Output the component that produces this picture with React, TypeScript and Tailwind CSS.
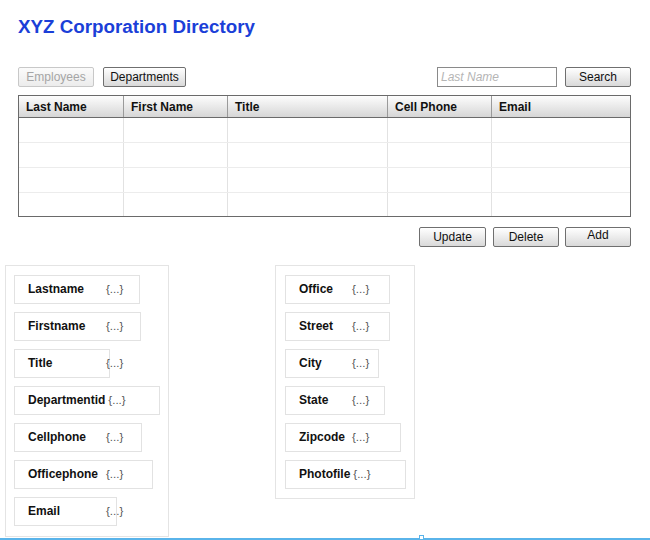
import React from "react";

const columns = [
  { label: "Last Name", width: "w-[105px]" },
  { label: "First Name", width: "w-[104px]" },
  { label: "Title", width: "w-[160px]" },
  { label: "Cell Phone", width: "w-[104px]" },
  { label: "Email", width: "w-[138px]" },
];

const leftFields = [
  { label: "Lastname", width: "w-[126px]" },
  { label: "Firstname", width: "w-[127px]" },
  { label: "Title", width: "w-[96px]" },
  { label: "Departmentid", width: "w-[146px]" },
  { label: "Cellphone", width: "w-[128px]" },
  { label: "Officephone", width: "w-[139px]" },
  { label: "Email", width: "w-[103px]" },
];

const rightFields = [
  { label: "Office", width: "w-[105px]" },
  { label: "Street", width: "w-[105px]" },
  { label: "City", width: "w-[94px]" },
  { label: "State", width: "w-[100px]" },
  { label: "Zipcode", width: "w-[116px]" },
  { label: "Photofile", width: "w-[121px]" },
];

function Btn({ label, className = "", disabled = false }: { label: string; className?: string; disabled?: boolean }) {
  return (
    <button
      type="button"
      className={
        "flex h-[20px] items-center justify-center rounded-[2px] border bg-gradient-to-b text-[12px] leading-none " +
        (disabled
          ? "border-[#c8c8c8] from-[#fbfbfb] to-[#ececec] text-[#a5a5a5] "
          : "border-[#6f6f6f] from-[#ffffff] to-[#d9d9d9] text-[#111] shadow-[inset_0_1px_0_#fff] ") +
        className
      }
    >
      {label}
    </button>
  );
}

function FieldBox({ label, width, labelWidth }: { label: string; width: string; labelWidth: string }) {
  return (
    <div className={"flex h-[29px] items-center border border-[#e2e2e2] pl-[13px] " + width}>
      <span className={"shrink-0 whitespace-nowrap pr-[3px] text-[12px] font-bold text-[#111] " + labelWidth}>{label}</span>
      <span className="whitespace-nowrap text-[11.5px] text-[#555]">{"{...}"}</span>
    </div>
  );
}

export default function App() {
  return (
    <div className="relative h-[540px] w-[650px] overflow-hidden bg-white font-['Liberation_Sans',Arial,sans-serif]">
      <h1 className="ml-[18px] pt-[18px] text-[18.8px] font-bold leading-none text-[#1b3fd8]">XYZ Corporation Directory</h1>

      {/* toolbar */}
      <div className="mt-[30px] flex items-center px-[18px] pr-[19px]">
        <Btn label="Employees" disabled className="w-[76px]" />
        <Btn label="Departments" className="ml-[9px] w-[83px]" />
        <div className="ml-auto flex h-[20px] w-[120px] items-center border border-[#8a8a8a] px-[3px] text-[12px] italic text-[#b5b5b5]">
          Last Name
        </div>
        <Btn label="Search" className="ml-[8px] w-[66px]" />
      </div>

      {/* table */}
      <div className="ml-[18px] mt-[8px] w-[613px] border border-[#6a6a6a]">
        <div className="flex h-[22px] border-b border-[#6a6a6a] bg-gradient-to-b from-[#fdfdfd] to-[#d6d6d6]">
          {columns.map((c, i) => (
            <div
              key={c.label}
              className={
                "flex items-center px-[7px] pt-[1px] text-[12px] font-bold text-[#111] " +
                c.width +
                (i < columns.length - 1 ? " border-r border-[#9a9a9a]" : "")
              }
            >
              {c.label}
            </div>
          ))}
        </div>
        {[0, 1, 2, 3].map((r) => (
          <div key={r} className={"flex " + (r < 3 ? "h-[25px] border-b border-[#ececec]" : "h-[23px]")}>
            {columns.map((c, i) => (
              <div key={c.label} className={c.width + (i < columns.length - 1 ? " border-r border-[#e2e2e2]" : "")} />
            ))}
          </div>
        ))}
      </div>

      {/* actions */}
      <div className="mt-[10px] flex justify-end pr-[19px]">
        <Btn label="Update" className="w-[67px]" />
        <Btn label="Delete" className="ml-[7px] w-[66px]" />
        <Btn label="Add" className="ml-[6px] w-[66px] pb-[3px]" />
      </div>

      {/* detail panels */}
      <div className="mt-[18px] flex items-start pl-[5px]">
        <div className="flex w-[164px] flex-col gap-[8px] border border-[#e4e4e4] px-[8px] pb-[10px] pt-[9px]">
          {leftFields.map((f) => (
            <FieldBox key={f.label} label={f.label} width={f.width} labelWidth="min-w-[78px]" />
          ))}
        </div>
        <div className="ml-[106px] flex w-[140px] flex-col gap-[8px] border border-[#e4e4e4] px-[9px] pb-[9px] pt-[9px]">
          {rightFields.map((f) => (
            <FieldBox key={f.label} label={f.label} width={f.width} labelWidth="min-w-[53px]" />
          ))}
        </div>
      </div>

      {/* selection edge at the bottom */}
      <div className="absolute bottom-0 left-0 h-[2px] w-[650px] bg-[#5ab4ea]" />
      <div className="absolute bottom-[0px] left-[419px] h-[5px] w-[5px] border border-[#5ab4ea] bg-white" />
    </div>
  );
}
